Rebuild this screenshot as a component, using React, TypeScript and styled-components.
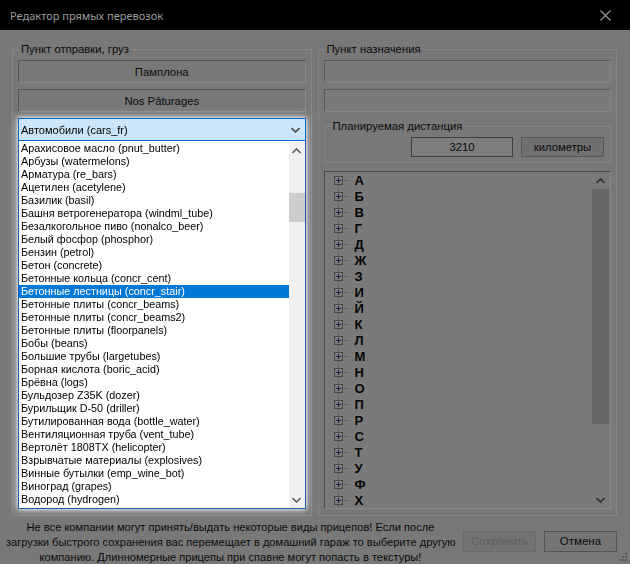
import styled, { createGlobalStyle } from 'styled-components'

const GlobalStyle = createGlobalStyle`
  html, body {
    margin: 0;
    padding: 0;
    background: #787878;
  }
  body {
    font-family: "Liberation Sans", Arial, sans-serif;
    overflow: hidden;
  }
`

const cargo = [
  'Арахисовое масло (pnut_butter)',
  'Арбузы (watermelons)',
  'Арматура (re_bars)',
  'Ацетилен (acetylene)',
  'Базилик (basil)',
  'Башня ветрогенератора (windml_tube)',
  'Безалкогольное пиво (nonalco_beer)',
  'Белый фосфор (phosphor)',
  'Бензин (petrol)',
  'Бетон (concrete)',
  'Бетонные кольца (concr_cent)',
  'Бетонные лестницы (concr_stair)',
  'Бетонные плиты (concr_beams)',
  'Бетонные плиты (concr_beams2)',
  'Бетонные плиты (floorpanels)',
  'Бобы (beans)',
  'Большие трубы (largetubes)',
  'Борная кислота (boric_acid)',
  'Брёвна (logs)',
  'Бульдозер Z35K (dozer)',
  'Бурильщик D-50 (driller)',
  'Бутилированная вода (bottle_water)',
  'Вентиляционная труба (vent_tube)',
  'Вертолёт 1808TX (helicopter)',
  'Взрывчатые материалы (explosives)',
  'Винные бутылки (emp_wine_bot)',
  'Виноград (grapes)',
  'Водород (hydrogen)',
  'Воздушные компрессоры (aircompr)',
]

const letters = ['А', 'Б', 'В', 'Г', 'Д', 'Ж', 'З', 'И', 'Й', 'К', 'Л', 'М', 'Н', 'О', 'П', 'Р', 'С', 'Т', 'У', 'Ф', 'Х']

function Chevron({ up, color }: { up?: boolean; color: string }) {
  return (
    <svg width="9" height="6" viewBox="0 0 9 6">
      <path
        d={up ? 'M0.5 5 L4.5 1 L8.5 5' : 'M0.5 1 L4.5 5 L8.5 1'}
        fill="none"
        stroke={color}
        strokeWidth="1.6"
      />
    </svg>
  )
}

function App() {
  return (
    <Window>
      <GlobalStyle />
      <TitleBar>
        <Title>Редактор прямых перевозок</Title>
        <CloseBox>
          <svg width="11" height="11" viewBox="0 0 11 11">
            <path d="M0.5 0.5 L10.5 10.5 M10.5 0.5 L0.5 10.5" stroke="#9c9c9c" strokeWidth="1.1" />
          </svg>
        </CloseBox>
      </TitleBar>

      <Main>
        <Group $width={300}>
          <Legend>Пункт отправки, груз</Legend>
          <Stack>
            <FlatButton>Памплона</FlatButton>
            <FlatButton>Nos Pâturages</FlatButton>
            <ComboWrap>
              <Combo>
                <span>Автомобили (cars_fr)</span>
                <Chevron color="#4a4a4a" />
              </Combo>
              <DropList>
                <Items>
                  {cargo.map((c, i) => (
                    <Item key={i} $selected={i === 11}>{c}</Item>
                  ))}
                </Items>
                <ScrollTrack $light>
                  <ArrowBtn><Chevron up color="#606060" /></ArrowBtn>
                  <ThumbArea>
                    <Thumb $light style={{ top: 34, height: 29 }} />
                  </ThumbArea>
                  <ArrowBtn><Chevron color="#606060" /></ArrowBtn>
                </ScrollTrack>
              </DropList>
            </ComboWrap>
          </Stack>
        </Group>

        <Group $width={300}>
          <Legend>Пункт назначения</Legend>
          <Stack>
            <Field />
            <Field />
            <InnerGroup>
              <Legend>Планируемая дистанция</Legend>
              <DistanceRow>
                <NumberBox>3210</NumberBox>
                <UnitButton>километры</UnitButton>
              </DistanceRow>
            </InnerGroup>
            <Tree>
              <TreeItems>
                <TreeLine />
                {letters.map((l) => (
                  <TreeRow key={l}>
                    <PlusBox>
                      <svg width="9" height="9" viewBox="0 0 9 9">
                        <rect x="0.5" y="0.5" width="8" height="8" fill="#7c7c7c" stroke="#474747" />
                        <path d="M2 4.5 H7 M4.5 2 V7" stroke="#15163a" strokeWidth="1" />
                      </svg>
                    </PlusBox>
                    <Dots />
                    <Letter>{l}</Letter>
                  </TreeRow>
                ))}
              </TreeItems>
              <ScrollTrack>
                <ArrowBtn><Chevron up color="#2e2e2e" /></ArrowBtn>
                <ThumbArea>
                  <Thumb style={{ top: 0, height: 235 }} />
                </ThumbArea>
                <ArrowBtn><Chevron color="#2e2e2e" /></ArrowBtn>
              </ScrollTrack>
            </Tree>
          </Stack>
        </Group>
      </Main>

      <BottomRow>
        <Notice>
          Не все компании могут принять/выдать некоторые виды прицепов! Если после
          <br />
          загрузки быстрого сохранения вас перемещает в домашний гараж то выберите другую
          <br />
          компанию. Длинномерные прицепы при спавне могут попасть в текстуры!
        </Notice>
        <DialogButton disabled>Сохранить</DialogButton>
        <DialogButton>Отмена</DialogButton>
        <Grip>
          <svg width="10" height="10" viewBox="0 0 10 10" fill="#5a5a5a">
            <rect x="7" y="1" width="2" height="2" />
            <rect x="4" y="4" width="2" height="2" />
            <rect x="7" y="4" width="2" height="2" />
            <rect x="1" y="7" width="2" height="2" />
            <rect x="4" y="7" width="2" height="2" />
            <rect x="7" y="7" width="2" height="2" />
          </svg>
        </Grip>
      </BottomRow>
    </Window>
  )
}

const Window = styled.div`
  width: 630px;
  height: 564px;
  display: flex;
  flex-direction: column;
  background: #787878;
  color: #0b0b0b;
  position: relative;
`

const TitleBar = styled.div`
  height: 30px;
  background: #000;
  display: flex;
  align-items: center;
  justify-content: space-between;
  padding: 0 19px 0 10px;
  flex-shrink: 0;
`

const Title = styled.div`
  font-family: "Noto Sans", "Open Sans", sans-serif;
  font-size: 11px;
  color: #9c9c9c;
`

const CloseBox = styled.div`
  display: flex;
  align-items: center;
`

const Main = styled.div`
  flex: 1;
  display: flex;
  gap: 6px;
  padding: 13px 13px 2px 12px;
  min-height: 0;
`

const Group = styled.fieldset<{ $width: number }>`
  width: ${(p) => p.$width}px;
  box-sizing: border-box;
  margin: 0;
  padding: 4px 5px 5px 5px;
  border: 1px solid #878787;
  min-width: 0;
`

const Legend = styled.legend`
  font-size: 11.3px;
  line-height: 13px;
  padding: 0 1px;
  margin-left: 2px;
  color: #0b0b0b;
`

const Stack = styled.div`
  display: flex;
  flex-direction: column;
  gap: 6px;
`

const FlatButton = styled.div`
  height: 23px;
  box-sizing: border-box;
  border: 1px solid;
  border-color: #555 #8a8a8a #8a8a8a #555;
  display: flex;
  align-items: center;
  justify-content: center;
  font-size: 11.3px;
`

const ComboWrap = styled.div`
  position: relative;
  z-index: 2;
  filter: drop-shadow(0 0 2px rgba(255, 255, 255, 0.95)) drop-shadow(0 0 4px rgba(255, 255, 255, 0.55));
`

const Combo = styled.div`
  height: 23px;
  box-sizing: border-box;
  background: #cce4f7;
  border: 1px solid #0a6cc9;
  display: flex;
  align-items: center;
  justify-content: space-between;
  padding: 0 5px 0 2px;
  font-size: 11px;
  color: #000;
`

const DropList = styled.div`
  position: absolute;
  left: 0;
  right: 0;
  top: 100%;
  height: 368px;
  box-sizing: border-box;
  background: #fff;
  border: 1px solid #1c5fae;
  border-top: none;
  padding-top: 1px;
  display: flex;
`

const Items = styled.div`
  flex: 1;
  overflow: hidden;
`

const Item = styled.div<{ $selected?: boolean }>`
  height: 13px;
  line-height: 13px;
  padding-left: 2px;
  font-size: 10.8px;
  white-space: nowrap;
  color: ${(p) => (p.$selected ? '#fff' : '#000')};
  background: ${(p) => (p.$selected ? '#0078d7' : 'transparent')};
`

const ScrollTrack = styled.div<{ $light?: boolean }>`
  width: ${(p) => (p.$light ? 16 : 17)}px;
  flex-shrink: 0;
  background: ${(p) => (p.$light ? '#f0f0f0' : '#787878')};
  display: flex;
  flex-direction: column;
`

const ArrowBtn = styled.div`
  height: 17px;
  display: flex;
  align-items: center;
  justify-content: center;
  flex-shrink: 0;
`

const ThumbArea = styled.div`
  flex: 1;
  position: relative;
`

const Thumb = styled.div<{ $light?: boolean }>`
  position: absolute;
  left: 0;
  right: 0;
  background: ${(p) => (p.$light ? '#cdcdcd' : '#676767')};
`

const Field = styled.div`
  height: 23px;
  box-sizing: border-box;
  border: 1px solid;
  border-color: #5a5a5a #858585 #858585 #5a5a5a;
  background: #7a7a7a;
`

const InnerGroup = styled.fieldset`
  margin: 2px 0 0;
  padding: 4px 6px 5px 5px;
  border: 1px solid #858585;
  min-width: 0;
`

const DistanceRow = styled.div`
  display: flex;
  justify-content: flex-end;
  gap: 8px;
`

const NumberBox = styled.div`
  width: 102px;
  height: 20px;
  box-sizing: border-box;
  border: 1px solid #3e3e3e;
  background: #7d7d7d;
  display: flex;
  align-items: center;
  justify-content: center;
  font-size: 11.3px;
`

const UnitButton = styled.div`
  width: 83px;
  height: 20px;
  box-sizing: border-box;
  border: 1px solid #575757;
  background: #707070;
  display: flex;
  align-items: center;
  justify-content: center;
  font-size: 11.3px;
`

const Tree = styled.div`
  margin-top: 2px;
  height: 338px;
  box-sizing: border-box;
  border: 1px solid;
  border-color: #4a4a4a #8a8a8a #8a8a8a #4a4a4a;
  background: #7a7a7a;
  display: flex;
  padding-right: 1px;
`

const TreeItems = styled.div`
  flex: 1;
  position: relative;
  overflow: hidden;
  padding-left: 9px;
`

const TreeLine = styled.div`
  position: absolute;
  left: 13px;
  top: 8px;
  bottom: 0;
  border-left: 1px dotted #4c4c4c;
`

const TreeRow = styled.div`
  height: 16px;
  display: flex;
  align-items: center;
  position: relative;
`

const PlusBox = styled.div`
  width: 9px;
  height: 9px;
  display: flex;
`

const Dots = styled.div`
  width: 5px;
  margin-left: 1px;
  border-top: 1px dotted #4c4c4c;
`

const Letter = styled.span`
  margin-left: 6px;
  font-size: 13px;
  font-weight: bold;
  color: #050505;
`

const BottomRow = styled.div`
  height: 46px;
  flex-shrink: 0;
  display: flex;
  align-items: center;
  padding: 0 13px 0 6px;
  position: relative;
`

const Notice = styled.div`
  width: 449px;
  text-align: center;
  font-size: 11.1px;
  line-height: 15px;
  margin-top: 3px;
  white-space: nowrap;
`

const DialogButton = styled.div<{ disabled?: boolean }>`
  width: 73px;
  height: 21px;
  box-sizing: border-box;
  margin-left: 8px;
  border: 1px solid ${(p) => (p.disabled ? '#6a6a6a' : '#545454')};
  background: ${(p) => (p.disabled ? '#727272' : '#747474')};
  color: ${(p) => (p.disabled ? '#5e5e5e' : '#0b0b0b')};
  display: flex;
  align-items: center;
  justify-content: center;
  font-size: 11.5px;
`

const Grip = styled.div`
  position: absolute;
  right: 2px;
  bottom: 2px;
  display: flex;
`

export default App
